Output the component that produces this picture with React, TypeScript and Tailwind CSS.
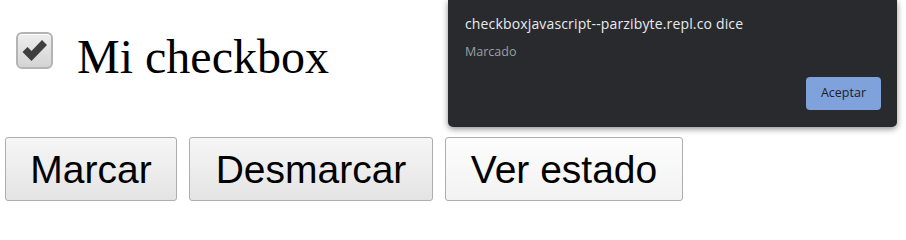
import React from "react";

export default function App() {
  return (
    <div className="relative w-[906px] h-[217px] bg-white overflow-hidden">
      <div className="flex items-start pt-[29px]">
        <div className="ml-[16px] mt-[3px] w-[37px] h-[37px] rounded-[6px] border-[2px] border-[#b4b4b4] bg-gradient-to-b from-[#eeeeee] to-[#d4d4d4] flex items-center justify-center shadow-[inset_0_1px_0_#ffffff]">
          <svg width="28" height="26" viewBox="0 0 28 26">
            <path d="M1.5 14 L6.5 9 L10.5 13 L21 2 L26 7 L10.5 23 Z" fill="#3f3f3f" />
          </svg>
        </div>
        <span className="ml-[24px] text-[48px] leading-[55px] text-black font-['Liberation_Serif',serif]">
          Mi checkbox
        </span>
      </div>

      <div className="flex gap-[12px] pl-[5px] mt-[53px]">
        <button className="w-[172px] h-[64px] rounded-[3px] border border-[#adadad] bg-gradient-to-b from-[#f6f6f6] to-[#e4e4e4] text-[39px] leading-none text-black font-['Liberation_Sans',sans-serif]">
          Marcar
        </button>
        <button className="w-[244px] h-[64px] rounded-[3px] border border-[#adadad] bg-gradient-to-b from-[#f6f6f6] to-[#e4e4e4] text-[39px] leading-none text-black font-['Liberation_Sans',sans-serif]">
          Desmarcar
        </button>
        <button className="w-[238px] h-[64px] rounded-[3px] border border-[#adadad] bg-gradient-to-b from-[#fdfdfd] to-[#f2f2f2] text-[39px] leading-none text-black font-['Liberation_Sans',sans-serif]">
          Ver estado
        </button>
      </div>

      <div className="absolute left-[448px] top-0 w-[449px] h-[127px] bg-[#292a2d] rounded-b-[5px] shadow-[0_2px_6px_rgba(0,0,0,0.45)] font-['Open_Sans',sans-serif] px-[17px] pt-[14px] flex flex-col">
        <div className="text-[14px] tracking-[0.15px] leading-[19px] text-[#e8eaed]">
          checkboxjavascript--parzibyte.repl.co dice
        </div>
        <div className="mt-[11px] text-[12.5px] leading-[16px] text-[#9aa0a6]">Marcado</div>
        <div className="flex justify-end mt-[17px] -mr-[1px]">
          <button className="w-[75px] h-[33px] rounded-[4px] bg-[#7fa1dc] text-[12.5px] text-[#202124]">
            Aceptar
          </button>
        </div>
      </div>
    </div>
  );
}
